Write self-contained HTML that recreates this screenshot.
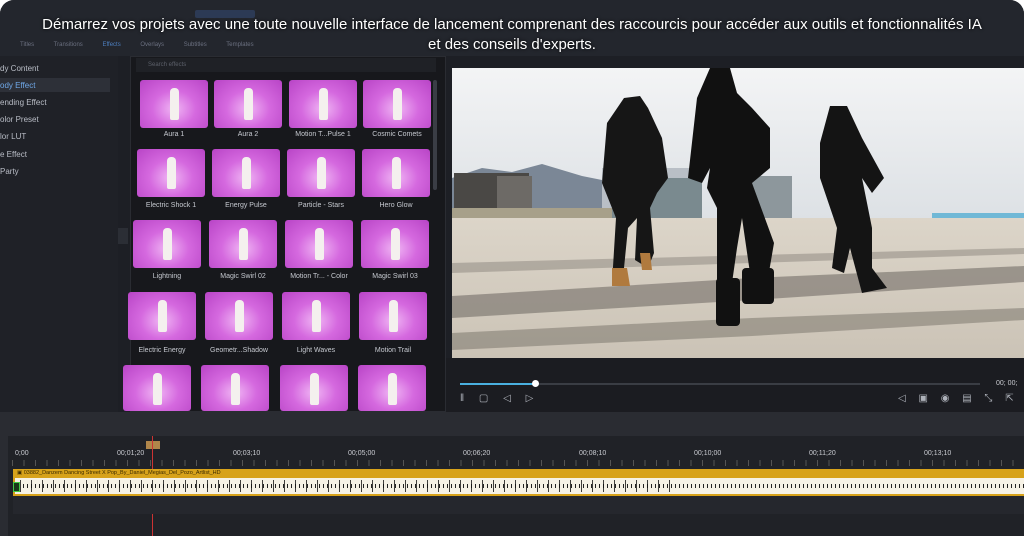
<!DOCTYPE html>
<html><head><meta charset="utf-8"><style>
*{margin:0;padding:0;box-sizing:border-box}
body{width:1024px;height:536px;overflow:hidden;background:#fff;font-family:"Liberation Sans",sans-serif}
#app{position:absolute;left:0;top:0;width:1024px;height:536px;background:#1d1f25;border-radius:14px 14px 0 0;overflow:hidden}
.abs{position:absolute;white-space:nowrap}
.cap{position:absolute;left:0;width:1024px;text-align:center;color:#fff;font-size:15px;line-height:20px;text-shadow:0 0 3px #000}
.side div{position:absolute;left:0;font-size:8px;color:#b9bdc6}
.th{position:absolute;width:68px;height:48px;border-radius:3px;background:radial-gradient(ellipse at 50% 60%,#f0b6f4 0%,#d569df 45%,#b844c6 100%)}
.th:after{content:"";position:absolute;left:30px;top:8px;width:9px;height:32px;background:#f4f0ee;border-radius:4px 4px 2px 2px}
.lb{position:absolute;width:76px;text-align:center;font-size:7px;color:#c6c9d0}
.tl{position:absolute;top:450px;font-size:7px;color:#c8cad0}
</style></head><body><div id="app">
<div class="abs" style="left:0;top:0;width:1024px;height:56px;background:#23262d"></div>
<div class="abs" style="left:195px;top:10px;width:60px;height:8px;background:#2c3a55;border-radius:2px"></div>
<div class="abs" style="left:20px;top:42px;font-size:6px;color:#6b7080;word-spacing:18px">Titles Transitions <span style="color:#4d7fc0">Effects</span> Overlays Subtitles Templates</div>
<div class="cap" style="top:15px">Démarrez vos projets avec une toute nouvelle interface de lancement comprenant des raccourcis pour accéder aux outils et fonctionnalités IA</div>
<div class="cap" style="top:35px">et des conseils d'experts.</div>
<div class="abs side" style="left:0;top:56px;width:118px;height:356px;background:#1f2127">
<div style="top:8px">dy Content</div>
<div style="top:22px;width:110px;height:14px;background:#2d3038;padding:3px 0 0;color:#6fa8e8">ody Effect</div>
<div style="top:42px">ending Effect</div>
<div style="top:59px">olor Preset</div>
<div style="top:76px">lor LUT</div>
<div style="top:94px">e Effect</div>
<div style="top:111px">Party</div>
</div>
<div class="abs" style="left:118px;top:228px;width:10px;height:16px;background:#2b2e35"></div>
<div class="abs" style="left:130px;top:56px;width:316px;height:356px;background:#17181c;border:1px solid #2a2c32"></div>
<div class="abs" style="left:136px;top:58px;width:300px;height:14px;background:#1f2126;font-size:6px;color:#5c606a;padding:4px 12px">Search effects</div>
<div class="abs" style="left:433px;top:80px;width:4px;height:110px;background:#3a3d45;border-radius:2px"></div>
<div class="th" style="left:140px;top:80px"></div><div class="th" style="left:214px;top:80px"></div><div class="th" style="left:289px;top:80px"></div><div class="th" style="left:363px;top:80px"></div>
<div class="lb" style="left:136px;top:131px">Aura 1</div><div class="lb" style="left:210px;top:131px">Aura 2</div><div class="lb" style="left:285px;top:131px">Motion T...Pulse 1</div><div class="lb" style="left:359px;top:131px">Cosmic Comets</div>
<div class="th" style="left:137px;top:149px"></div><div class="th" style="left:212px;top:149px"></div><div class="th" style="left:287px;top:149px"></div><div class="th" style="left:362px;top:149px"></div>
<div class="lb" style="left:133px;top:202px">Electric Shock 1</div><div class="lb" style="left:208px;top:202px">Energy Pulse</div><div class="lb" style="left:283px;top:202px">Particle - Stars</div><div class="lb" style="left:358px;top:202px">Hero Glow</div>
<div class="th" style="left:133px;top:220px"></div><div class="th" style="left:209px;top:220px"></div><div class="th" style="left:285px;top:220px"></div><div class="th" style="left:361px;top:220px"></div>
<div class="lb" style="left:129px;top:273px">Lightning</div><div class="lb" style="left:205px;top:273px">Magic Swirl 02</div><div class="lb" style="left:281px;top:273px">Motion Tr... - Color</div><div class="lb" style="left:357px;top:273px">Magic Swirl 03</div>
<div class="th" style="left:128px;top:292px"></div><div class="th" style="left:205px;top:292px"></div><div class="th" style="left:282px;top:292px"></div><div class="th" style="left:359px;top:292px"></div>
<div class="lb" style="left:124px;top:347px">Electric Energy</div><div class="lb" style="left:201px;top:347px">Geometr...Shadow</div><div class="lb" style="left:278px;top:347px">Light Waves</div><div class="lb" style="left:355px;top:347px">Motion Trail</div>
<div class="th" style="left:123px;top:365px;height:46px"></div><div class="th" style="left:201px;top:365px;height:46px"></div><div class="th" style="left:280px;top:365px;height:46px"></div><div class="th" style="left:358px;top:365px;height:46px"></div>
<svg class="abs" style="left:452px;top:68px" width="572" height="290" viewBox="0 0 572 290">
<defs><linearGradient id="sky" x1="0" y1="0" x2="0" y2="1"><stop offset="0" stop-color="#f3f4f5"/><stop offset="1" stop-color="#dde1e5"/></linearGradient>
<linearGradient id="gr" x1="0" y1="0" x2="0" y2="1"><stop offset="0" stop-color="#dcd5c9"/><stop offset="1" stop-color="#cbc3b6"/></linearGradient></defs>
<rect width="572" height="150" fill="url(#sky)"/>
<path d="M0 110 L30 100 L60 104 L90 96 L130 108 L150 112 L150 150 L0 150Z" fill="#7b8796"/>
<rect x="2" y="105" width="75" height="45" fill="#4a4845"/><rect x="45" y="108" width="35" height="42" fill="#6d6a66"/>
<rect x="150" y="100" width="100" height="50" fill="#b9bfc6"/><rect x="160" y="110" width="90" height="40" fill="#7a8a8f"/>
<rect x="270" y="108" width="70" height="42" fill="#8d979c"/>
<rect x="0" y="140" width="160" height="12" fill="#a7a08a"/>
<rect x="480" y="145" width="92" height="25" fill="#70b8d6"/>
<rect x="0" y="150" width="572" height="140" fill="url(#gr)"/>
<path d="M0 228 L300 210 L572 198 L572 214 L300 232 L0 250Z" fill="#6a655e" opacity=".55"/>
<path d="M0 265 L300 250 L572 240 L572 252 L300 268 L0 282Z" fill="#6a655e" opacity=".45"/>
<path d="M0 195 L572 180 L572 186 L0 205Z" fill="#6a655e" opacity=".35"/>
<path d="M172 30 L188 28 L196 40 L210 70 L216 110 L205 125 L198 140 L202 185 L196 200 L183 192 L185 150 L176 160 L172 200 L160 215 L164 150 L150 115 L155 55Z" fill="#161616"/>
<path d="M160 200 L175 200 L178 218 L160 218Z" fill="#b07a3e"/><path d="M188 185 L198 185 L200 202 L190 202Z" fill="#b07a3e"/>
<path d="M258 0 L278 0 L285 25 L300 40 L318 60 L318 100 L300 115 L322 175 L316 210 L298 205 L290 150 L285 180 L280 215 L265 220 L265 140 L255 120 L258 100 L250 115 L236 110 L245 30Z" fill="#111"/>
<rect x="264" y="210" width="24" height="48" rx="4" fill="#111"/><rect x="290" y="200" width="32" height="36" rx="4" fill="#111"/>
<path d="M378 38 L395 38 L410 70 L432 110 L420 125 L410 110 L420 160 L420 200 L435 220 L410 225 L398 180 L392 205 L380 200 L385 160 L368 110 L368 75Z" fill="#141414"/>
</svg>
<div class="abs" style="left:446px;top:358px;width:578px;height:54px;background:#1b1c21"></div>
<div class="abs" style="left:460px;top:383px;width:520px;height:2px;background:#3a3d44"></div>
<div class="abs" style="left:460px;top:383px;width:75px;height:2px;background:#4ab0e0"></div>
<div class="abs" style="left:532px;top:380px;width:7px;height:7px;border-radius:50%;background:#fff"></div>
<div class="abs" style="left:996px;top:380px;font-size:7px;color:#c8cad0">00; 00;</div>
<div class="abs" style="left:460px;top:393px;font-size:10px;color:#aeb2ba;letter-spacing:6px">‖ ▢ ◁ ▷</div>
<div class="abs" style="left:898px;top:393px;font-size:10px;color:#aeb2ba;letter-spacing:5px">◁ ▣ ◉ ▤ ⤡ ⇱</div>
<div class="abs" style="left:0;top:412px;width:1024px;height:24px;background:#2a2c32"></div>
<div class="abs" style="left:0;top:436px;width:1024px;height:100px;background:#202227"></div>
<div class="abs" style="left:0;top:436px;width:8px;height:100px;background:#2a2c32"></div>
<div class="abs" style="left:12px;top:460px;width:1012px;height:6px;background:repeating-linear-gradient(90deg,#555 0 1px,transparent 1px 11.5px)"></div>
<div class="tl" style="left:15px">0;00</div><div class="tl" style="left:117px">00;01;20</div><div class="tl" style="left:233px">00;03;10</div><div class="tl" style="left:348px">00;05;00</div><div class="tl" style="left:463px">00;06;20</div><div class="tl" style="left:579px">00;08;10</div><div class="tl" style="left:694px">00;10;00</div><div class="tl" style="left:809px">00;11;20</div><div class="tl" style="left:924px">00;13;10</div>
<div class="abs" style="left:146px;top:441px;width:14px;height:8px;background:#b0864a"></div>
<div class="abs" style="left:152px;top:436px;width:1px;height:100px;background:#c33"></div>
<div class="abs" style="left:13px;top:469px;width:1011px;height:27px;background:#d7a21a"></div>
<div class="abs" style="left:17px;top:470px;font-size:5.5px;color:#3a2a00">▣ 03882_Danzem Dancing Street X Pop_By_Daniel_Megias_Del_Pozo_Artlist_HD</div>
<div class="abs" style="left:15px;top:478px;width:1009px;height:16px;background:#f6f2e6"></div>
<div class="abs" style="left:15px;top:484px;width:1009px;height:4px;background:repeating-linear-gradient(90deg,#222 0 1px,transparent 1px 4px)"></div>
<div class="abs" style="left:20px;top:480px;width:650px;height:12px;background:repeating-linear-gradient(90deg,#111 0 1px,transparent 1px 11px);opacity:.8"></div>
<div class="abs" style="left:13px;top:482px;width:7px;height:10px;background:#1a3a1a;border:1px solid #4c4"></div>
<div class="abs" style="left:13px;top:496px;width:1011px;height:18px;background:#25272d"></div>
</div></body></html>
